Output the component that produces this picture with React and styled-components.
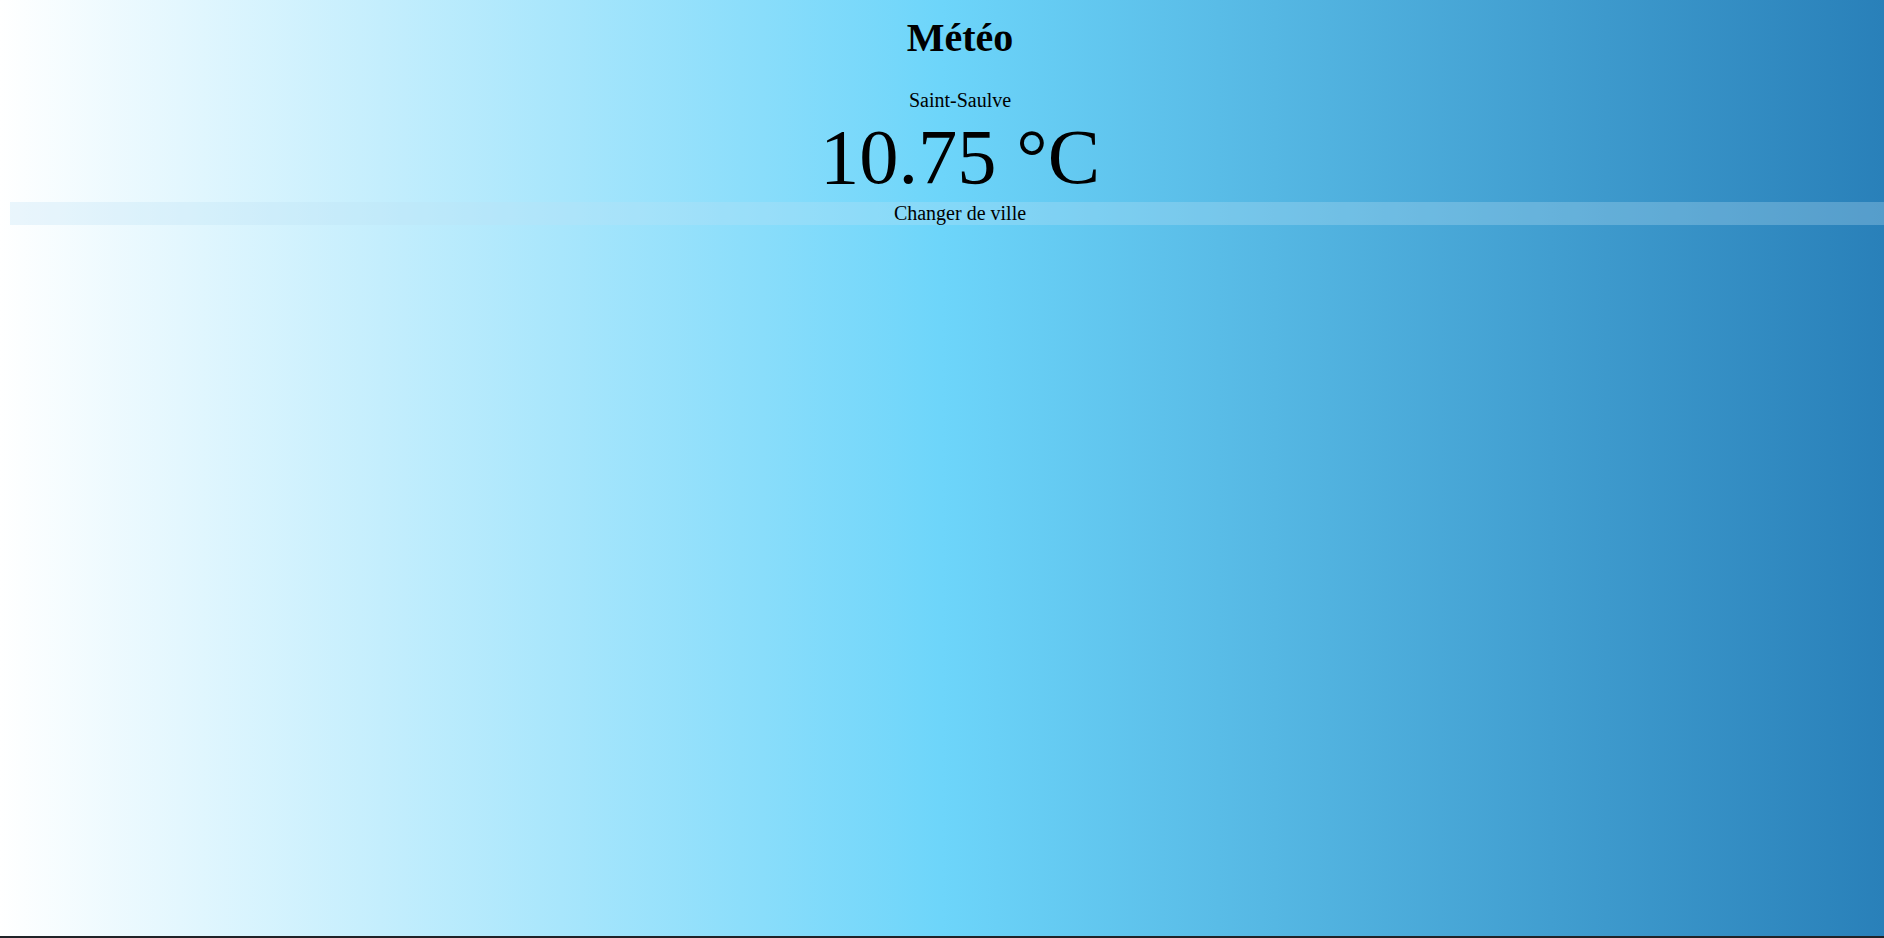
import React from 'react';
import styled, { createGlobalStyle } from 'styled-components';

const GlobalStyle = createGlobalStyle`
  html, body {
    margin: 0;
    padding: 0;
    overflow: hidden;
    background: #202328;
  }
  body {
    font-family: 'Liberation Serif', 'Times New Roman', serif;
    font-size: 20px;
    color: #000;
  }
`;

const Page = styled.div`
  box-sizing: border-box;
  height: 100vh;
  padding-left: 10px;
  border-bottom: 2px solid #202328;
  background: linear-gradient(to left, #2980b9, #6dd5fa, #ffffff);
`;

const Content = styled.main`
  width: calc(100vw + 16px);
  display: flex;
  flex-direction: column;
  align-items: center;
`;

const Title = styled.h1`
  margin: 14px 0 0;
  font-size: 40px;
  font-weight: bold;
  line-height: normal;
`;

const City = styled.p`
  margin: 28px 0 0;
  font-size: 20px;
  line-height: normal;
`;

const Temperature = styled.p`
  margin: 0;
  font-size: 78.5px;
  line-height: normal;
`;

const ChangeButton = styled.button`
  align-self: stretch;
  margin: 0;
  padding: 0;
  border: none;
  background: rgba(190, 225, 245, 0.3);
  font-family: inherit;
  font-size: 20px;
  line-height: normal;
  color: #000;
  cursor: pointer;
`;

function App() {
  const city = 'Saint-Saulve';
  const temp = 10.75;

  return (
    <>
      <GlobalStyle />
      <Page>
        <Content>
          <Title>Météo</Title>
          <City>{city}</City>
          <Temperature>{temp} °C</Temperature>
          <ChangeButton>Changer de ville</ChangeButton>
        </Content>
      </Page>
    </>
  );
}

export default App;
